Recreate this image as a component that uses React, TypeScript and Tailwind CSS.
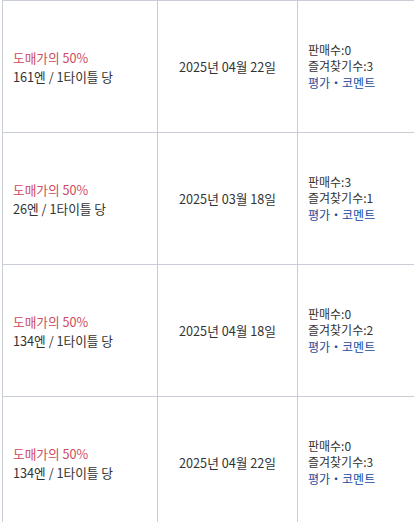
const rows = [
  { price: "161엔 / 1타이틀 당", date: "2025년 04월 22일", sales: 0, fav: 3 },
  { price: "26엔 / 1타이틀 당", date: "2025년 03월 18일", sales: 3, fav: 1 },
  { price: "134엔 / 1타이틀 당", date: "2025년 04월 18일", sales: 0, fav: 2 },
  { price: "134엔 / 1타이틀 당", date: "2025년 04월 22일", sales: 0, fav: 3 },
]

export default function App() {
  return (
    <div
      className="w-[414px] h-[522px] overflow-hidden bg-white text-[12.7px] text-[#333]"
      style={{ fontFamily: '"Noto Sans CJK KR", "Noto Sans", sans-serif' }}
    >
      <div className="ml-[2px] w-[520px] border-l border-t border-[#c9cdd6]">
        {rows.map((r, i) => (
          <div key={i} className="flex h-[132px] border-b border-[#c9cdd6]">
            <div className="w-[155px] shrink-0 flex flex-col justify-center pl-[10px] border-r border-[#c9cdd6] leading-[19px]">
              <span className="text-[#cf4a5e]">도매가의 50%</span>
              <span>{r.price}</span>
            </div>
            <div className="w-[140px] shrink-0 flex items-center justify-center border-r border-[#c9cdd6]">
              {r.date}
            </div>
            <div className="flex-1 flex flex-col justify-center pl-[10px] text-[12px] leading-[16.5px]">
              <span>{`판매수:${r.sales}`}</span>
              <span>{`즐겨찾기수:${r.fav}`}</span>
              <a href="#" className="text-[#1b4a9b]">평가・코멘트</a>
            </div>
          </div>
        ))}
      </div>
    </div>
  )
}
